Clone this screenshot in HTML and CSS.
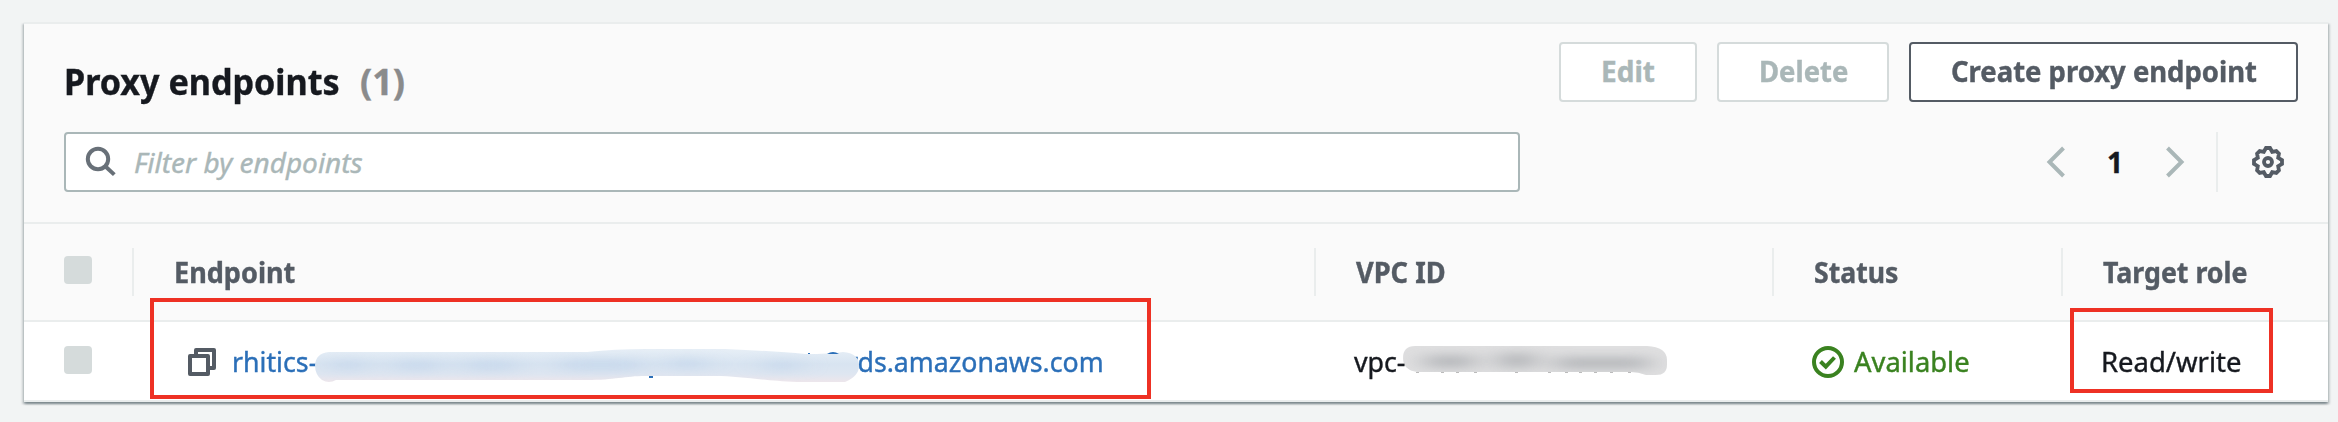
FILE: index.html
```html
<!DOCTYPE html>
<html lang="en">
<head>
<meta charset="utf-8">
<title>Proxy endpoints</title>
<link rel="stylesheet" href="styles.css">
</head>
<body>
<section class="card">
  <header class="card-header">
    <div class="title-row">
      <h2 class="title"><span class="t title-text">Proxy endpoints</span><span class="t count">(1)</span></h2>
      <div class="actions">
        <button class="btn btn-edit" disabled><span class="t edit-text">Edit</span></button>
        <button class="btn btn-delete" disabled><span class="t delete-text">Delete</span></button>
        <button class="btn btn-create"><span class="t create-text">Create proxy endpoint</span></button>
      </div>
    </div>
    <div class="filter-row">
      <label class="search">
        <svg class="search-icon" width="32" height="32" viewBox="0 0 32 32" fill="none" stroke="#687078" stroke-width="4"><circle cx="13" cy="13" r="10.2"/><path d="M20 20l9.3 8.6"/></svg>
        <span class="t placeholder">Filter by endpoints</span>
      </label>
      <div class="pager">
        <svg class="prev" width="20" height="32" viewBox="0 0 20 32" fill="none" stroke="#aab7b8" stroke-width="4"><path d="M17.5 2L3.5 16l14 14"/></svg>
        <span class="t page">1</span>
        <svg class="next" width="20" height="32" viewBox="0 0 20 32" fill="none" stroke="#aab7b8" stroke-width="4"><path d="M2.5 2l14 14-14 14"/></svg>
        <span class="settings">
          <svg width="32" height="32" viewBox="-16 -16 32 32" fill="none" stroke="#545b64" stroke-width="3.8"><path d="M-2-14H2L4.200-10.200 8.300-10.900 10.900-8.300 10.200-4.200 14-2V2L10.200 4.200 10.900 8.300 8.300 10.900 4.200 10.200 2 14H-2L-4.200 10.200-8.300 10.900-10.900 8.300-10.200 4.200-14 2V-2L-10.200-4.200-10.900-8.300-8.300-10.900-4.200-10.200Z"/><circle r="4"/></svg>
        </span>
      </div>
    </div>
  </header>
  <div class="table">
    <div class="row head">
      <div class="cell"><span class="check"></span></div>
      <div class="cell"><span class="t h-endpoint">Endpoint</span></div>
      <div class="cell"><span class="t h-vpc">VPC ID</span></div>
      <div class="cell"><span class="t h-status">Status</span></div>
      <div class="cell"><span class="t h-role">Target role</span></div>
    </div>
    <div class="row body">
      <div class="cell"><span class="check"></span></div>
      <div class="cell endpoint">
        <svg class="copy" width="28" height="28" viewBox="0 0 28 28" fill="none" stroke="#545b64" stroke-width="4" stroke-linejoin="round"><path d="M8 7V2h18v18h-5"/><path d="M2 8h18v18H2z"/></svg>
        <a class="t link-a">rhitics-</a>
        <svg class="smudge-link" width="546" height="40" viewBox="0 0 546 40">
          <defs>
            <linearGradient id="fade" x1="0" y1="0" x2="0" y2="1"><stop offset=".15" stop-color="#e6eef6"/><stop offset=".5" stop-color="#d8e4f1"/><stop offset=".75" stop-color="#dee6f1"/><stop offset="1" stop-color="#f1e6ea"/></linearGradient>
            <clipPath id="stroke"><path d="M14 8H272Q300 5 330 5H410Q460 7 490 10Q515 10 528 8Q544 9 544 22Q544 32 530 38H482C440 36 425 32 400 32H330C310 32 300 36 272 36H21Q14 40 7 36Q0 31 0 21Q1 9 14 8Z"/></clipPath>
            <filter id="soft" x="-20%" y="-80%" width="140%" height="260%"><feGaussianBlur stdDeviation="14 5"/></filter>
          </defs>
          <g clip-path="url(#stroke)"><rect width="546" height="40" fill="url(#fade)"/><g filter="url(#soft)" fill="#b9cfe8" opacity=".5"><rect x="18" y="15" width="32" height="12"/><rect x="80" y="16" width="45" height="11"/><rect x="150" y="16" width="52" height="11"/><rect x="246" y="15" width="80" height="12"/><rect x="355" y="14" width="35" height="11"/><rect x="450" y="16" width="34" height="11"/></g></g>
          <path class="remnant" d="M334 32h4v2h-4zM493 9h2v1h-2zM512 10q6-4 12 0z"/>
        </svg>
        <a class="t link-b">rds.amazonaws.com</a>
      </div>
      <div class="cell vpc">
        <span class="t vpc-text">vpc-</span>
        <svg class="smudge-vpc" width="264" height="32" viewBox="0 0 264 32">
          <defs><clipPath id="pill"><path d="M12 1H244Q264 2 264 15V20Q264 30 253 30H243Q235 27 228 27H14Q0 25 0 13Q0 1 12 1Z"/></clipPath><filter id="softer" x="-20%" y="-80%" width="140%" height="260%"><feGaussianBlur stdDeviation="13 5"/></filter></defs>
          <g clip-path="url(#pill)"><rect width="264" height="32" fill="#dfdfe0"/><g filter="url(#softer)" fill="#b0b2b6" opacity=".85"><rect x="22" y="10" width="50" height="13"/><rect x="95" y="8" width="38" height="15"/><rect x="152" y="12" width="94" height="12"/></g></g>
          <path fill="#777" opacity=".5" d="M13 27h3v1h-3zM38 27h3v1h-3zM53 27h3v1h-3zM71 27h3v1h-3zM112 27h3v1h-3zM145 27h3v1h-3zM162 27h3v1h-3zM176 27h3v1h-3zM191 27h3v1h-3zM207 27h3v1h-3zM225 27h3v1h-3z"/>
        </svg>
      </div>
      <div class="cell status">
        <svg class="ok" width="32" height="32" viewBox="0 0 32 32" fill="none" stroke="#3a8220" stroke-width="4"><circle cx="16" cy="16" r="14"/><path d="M8.500 15.500l5.300 5.200L22.500 11.500"/></svg>
        <span class="t available">Available</span>
      </div>
      <div class="cell"><span class="t role">Read/write</span></div>
    </div>
  </div>
</section>
<div class="mark mark-endpoint"></div>
<div class="mark mark-role"></div>
</body>
</html>
```
FILE: styles.css
```css
* { box-sizing: border-box; }
body { margin: 0; padding: 22px 10px 0 24px; width: 2338px; height: 422px; overflow: hidden; background: #f2f4f4; color: #16191f; font: 28px/40px "Noto Sans", "Open Sans", sans-serif; }
.t { display: inline-block; flex: none; white-space: nowrap; transform-origin: 0 50%; -webkit-text-stroke: .4px currentColor; }
.card { width: 2304px; height: 380px; background: #fff; border-top: 2px solid #eaeded; border-bottom: 2px solid #eaeded; box-shadow: 0 2px 2px rgba(0,28,36,.3), 2px 2px 2px rgba(0,28,36,.15), -2px 2px 2px rgba(0,28,36,.15); }
.card-header { height: 198px; padding: 18px 30px 0 40px; background: #fafafa; }
.title-row { display: flex; justify-content: space-between; height: 90px; }
.title { display: flex; margin: 16px 0 0; font-size: 36px; line-height: 48px; font-weight: 700; }
.title-text { width: 296px; transform: scaleX(.947); }
.count { color: #8a8b8c; }
.actions { display: flex; gap: 20px; }
.btn { height: 60px; border: 2px solid #d5dbdb; border-radius: 4px; background: #fff; color: #aab7b8; font: 700 28px/40px "Noto Sans", "Open Sans", sans-serif; text-align: left; padding: 0 0 2px 40px; }
.btn-edit { width: 138px; }
.btn-delete { width: 172px; }
.btn-create { width: 389px; border-color: #545b64; color: #545b64; }
.delete-text { transform: scaleX(.98); }
.create-text { transform: scaleX(.98); }
.filter-row { display: flex; justify-content: space-between; height: 60px; }
.search { display: flex; align-items: center; width: 1456px; height: 60px; border: 2px solid #aab7b8; border-radius: 4px; background: #fff; padding-left: 19px; }
.placeholder { margin-left: 17px; color: #aab7b8; font-style: italic; }
.pager { display: flex; align-items: center; width: 252px; }
.page { width: 58px; margin-left: 41px; font-weight: 700; }
.settings { display: flex; align-items: center; height: 60px; margin-left: 31px; padding-left: 34px; border-left: 2px solid #eaeded; }
.row { display: grid; grid-template-columns: 110px 1182px 458px 289px 265px; }
.head { height: 100px; background: #fafafa; border-top: 2px solid #eaeded; border-bottom: 2px solid #eaeded; color: #545b64; font-weight: 700; padding-top: 24px; }
.head .cell { height: 48px; padding: 4px 0 0 40px; border-right: 2px solid #eaeded; }
.head .cell:last-child { border: 0; }
.h-endpoint { transform: scaleX(.967); }
.h-vpc { transform: scaleX(.972); }
.h-status { transform: scaleX(.95); }
.h-role { transform: scaleX(.955); }
.body { height: 78px; align-items: center; }
.body .cell { display: flex; align-items: center; height: 78px; padding-left: 38px; }
.body .cell:first-child, .body .endpoint { padding-left: 40px; }
.check { display: block; width: 28px; height: 28px; margin-top: 4px; border-radius: 4px; background: #d5dbdb; }
.body .check { margin-top: -2px; }
.endpoint .copy { margin: 2px 16px 0 14px; }
.link-a, .link-b { color: #2b6fb8; }
.link-a { width: 83px; transform: scaleX(.955); }
.smudge-link { flex: none; z-index: 1; margin-top: 6px; }
.link-b { margin-left: -14px; transform: scaleX(.953); }
.remnant { fill: #2b6fb8; }
.vpc-text { width: 49px; transform: scaleX(.955); }
.smudge-vpc { flex: none; }
.ok { margin: 2px 10px 0 0; }
.available { color: #3a8220; transform: scaleX(.978); }
.role { transform: scaleX(.98); }
.mark { position: absolute; border: 4px solid #ee3124; }
.mark-endpoint { left: 150px; top: 298px; width: 1001px; height: 101px; }
.mark-role { left: 2070px; top: 308px; width: 203px; height: 85px; }
```
